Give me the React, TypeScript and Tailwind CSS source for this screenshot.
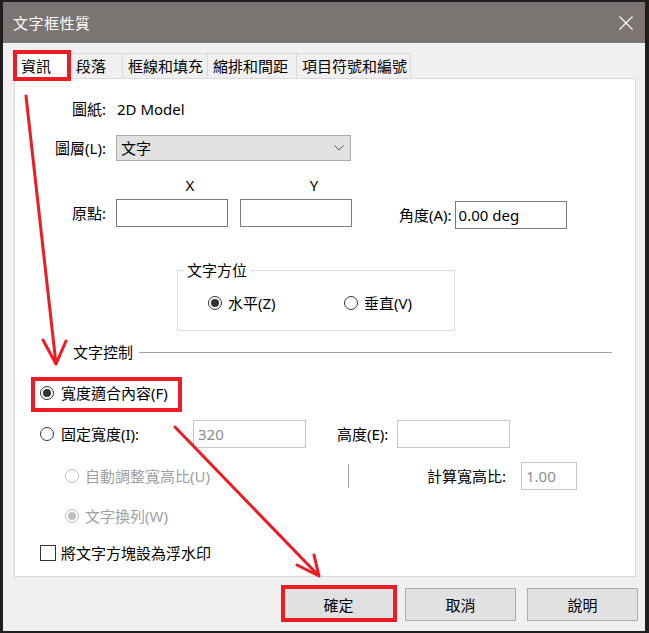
import React from "react";

const Radio = ({ checked, disabled }: { checked?: boolean; disabled?: boolean }) => (
  <span
    className={
      "w-[14px] h-[14px] shrink-0 rounded-full border flex items-center justify-center bg-white " +
      (disabled ? "border-[#c0c0c0]" : "border-[#333333]")
    }
  >
    {checked && (
      <span className={"w-[8px] h-[8px] rounded-full " + (disabled ? "bg-[#c0c0c0]" : "bg-[#333333]")} />
    )}
  </span>
);

const tabs = [
  { name: "段落", w: "w-[52px]" },
  { name: "框線和填充", w: "w-[85px]" },
  { name: "縮排和間距", w: "w-[89px]" },
  { name: "項目符號和編號", w: "w-[114px]" },
];

export default function App() {
  return (
    <div className="relative w-[649px] h-[633px] overflow-hidden bg-[#1e1e1e] pt-[2px] pl-[3px] font-['Noto_Sans','Noto_Sans_CJK_TC',sans-serif] text-[15px] leading-[20px] text-black">
      <div className="w-[642px] h-[629px] flex flex-col bg-[#f0f0f0]">
        {/* title bar */}
        <div className="h-[41px] shrink-0 bg-[#7a7473] flex items-center justify-between pl-[10px] pr-[12px] text-white">
          <span className="tracking-[0.5px]">文字框性質</span>
          <svg width="14" height="14" viewBox="0 0 14 14">
            <path d="M0.5 0.5 L13.5 13.5 M13.5 0.5 L0.5 13.5" stroke="#ffffff" strokeWidth="1.2" fill="none" />
          </svg>
        </div>

        <div className="flex-1 flex flex-col pl-[11px]">
          {/* tabs */}
          <div className="mt-[7px] h-[28px] flex">
            <div className="relative z-10 -ml-[1px] w-[58px] h-[31px] self-start bg-white border-4 border-[#ed1c24] pl-[4px] flex items-center">
              資訊
            </div>
            {tabs.map((t) => (
              <div
                key={t.name}
                className={t.w + " h-[25px] self-end bg-[#f0f0f0] border-t border-r border-[#d9d9d9] pl-[5px] flex items-center"}
              >
                {t.name}
              </div>
            ))}
          </div>

          {/* panel */}
          <div className="w-[622px] h-[499px] shrink-0 border border-[#d9d9d9] bg-white flex flex-col">
            <div className="mt-[18px] h-[24px] flex items-center">
              <span className="w-[91px] text-right">圖紙:</span>
              <span className="ml-[11px]">2D Model</span>
            </div>

            <div className="mt-[14px] h-[26px] flex items-center">
              <span className="w-[91px] text-right">圖層(L):</span>
              <div className="ml-[10px] w-[235px] h-full bg-[#e1e1e1] border border-[#adadad] flex items-center justify-between pl-[4px] pr-[6px]">
                <span>文字</span>
                <svg width="10" height="6" viewBox="0 0 10 6">
                  <path d="M0.5 0.5 L5 5 L9.5 0.5" stroke="#555555" strokeWidth="1" fill="none" />
                </svg>
              </div>
            </div>

            <div className="mt-[14px] h-[20px] flex items-center pl-[101px]">
              <div className="w-[112px] pl-[36px] text-center">X</div>
              <div className="ml-[12px] w-[112px] pl-[36px] text-center">Y</div>
            </div>

            <div className="mt-[4px] h-[30px] flex items-start">
              <span className="w-[91px] h-[28px] flex items-center justify-end">原點:</span>
              <div className="ml-[10px] w-[112px] h-[28px] border border-[#7a7a7a]" />
              <div className="ml-[12px] w-[112px] h-[28px] border border-[#7a7a7a]" />
              <span className="ml-[47px] mt-[2px] h-[28px] flex items-center">角度(A):</span>
              <div className="ml-[3px] mt-[2px] w-[112px] h-[28px] border border-[#7a7a7a] pl-[3px] flex items-center">
                0.00 deg
              </div>
            </div>

            {/* 文字方位 */}
            <div className="relative mt-[41px] ml-[162px] w-[278px] h-[61px] shrink-0 border border-[#dcdcdc]">
              <span className="absolute left-[6px] -top-[11px] bg-white px-[3px]">文字方位</span>
              <div className="pt-[22px] pl-[30px] h-[20px] flex items-center box-content">
                <div className="w-[136px] flex items-center">
                  <Radio checked />
                  <span className="ml-[6px]">水平(Z)</span>
                </div>
                <div className="flex items-center">
                  <Radio />
                  <span className="ml-[6px]">垂直(V)</span>
                </div>
              </div>
            </div>

            <div className="mt-[11px] h-[20px] flex items-center pl-[58px]">
              <span>文字控制</span>
              <div className="flex-1 h-px bg-[#a0a0a0] ml-[6px] mr-[23px]" />
            </div>

            <div className="relative mt-[21px] ml-[25px] h-[20px] w-fit flex items-center">
              <Radio checked />
              <span className="ml-[7px]">寬度適合內容(F)</span>
              <div className="absolute -left-[9px] -top-[6px] w-[151px] h-[35px] border-4 border-[#ed1c24] pointer-events-none" />
            </div>

            <div className="mt-[17px] ml-[25px] h-[28px] flex items-center">
              <div className="w-[153px] flex items-center">
                <Radio />
                <span className="ml-[7px]">固定寬度(I):</span>
              </div>
              <div className="w-[113px] h-[28px] border border-[#c8c8c8] pl-[4px] flex items-center text-[#8c8c8c]">320</div>
              <span className="ml-[31px] w-[60px]">高度(E):</span>
              <div className="w-[113px] h-[28px] border border-[#c8c8c8]" />
            </div>

            <div className="mt-[14px] ml-[50px] h-[28px] flex items-center">
              <div className="w-[283px] flex items-center">
                <Radio disabled />
                <span className="ml-[6px] text-[#a0a0a0]">自動調整寬高比(U)</span>
              </div>
              <div className="w-px h-[24px] bg-[#a0a0a0]" />
              <span className="w-[157px] text-right">計算寬高比:</span>
              <div className="ml-[15px] w-[56px] h-[28px] border border-[#c8c8c8] pl-[4px] flex items-center text-[#8c8c8c]">1.00</div>
            </div>

            <div className="mt-[16px] ml-[50px] h-[20px] flex items-center">
              <Radio checked disabled />
              <span className="ml-[6px] text-[#a0a0a0]">文字換列(W)</span>
            </div>

            <div className="mt-[17px] ml-[25px] h-[20px] flex items-center">
              <span className="w-[16px] h-[16px] border border-[#333333] bg-white" />
              <span className="ml-[5px]">將文字方塊設為浮水印</span>
            </div>
          </div>

          {/* buttons */}
          <div className="mt-[11px] ml-[269px] flex gap-[11px]">
            <div className="relative w-[111px] h-[33px] bg-[#e1e1e1] border border-[#adadad] flex items-center justify-center">
              確定
              <div className="absolute -left-[3px] -top-[4px] w-[116px] h-[37px] border-4 border-[#ed1c24] pointer-events-none" />
            </div>
            <div className="w-[111px] h-[33px] bg-[#e1e1e1] border border-[#adadad] flex items-center justify-center">取消</div>
            <div className="w-[111px] h-[33px] bg-[#e1e1e1] border border-[#adadad] flex items-center justify-center">說明</div>
          </div>
        </div>
      </div>

      {/* annotation arrows */}
      <svg className="absolute inset-0 pointer-events-none" width="649" height="633" viewBox="0 0 649 633">
        <g stroke="#ed1c24" strokeWidth="3" strokeLinecap="round" fill="none">
          <path d="M26 96 L56 364 M43 340 L56 364 M66 341 L56 364" />
          <path d="M175 427 L319 576 M297 565 L319 576 M314 555 L319 576" />
        </g>
      </svg>
    </div>
  );
}
